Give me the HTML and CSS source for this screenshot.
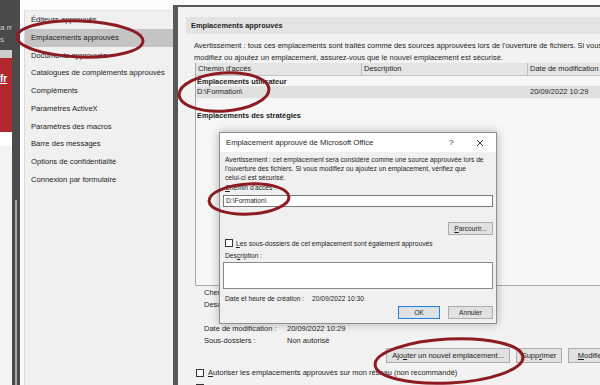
FILE: index.html
```html
<!DOCTYPE html>
<html lang="fr">
<head>
    <meta charset="UTF-8">
    <title>Centre de gestion de la confidentialité</title>
    <link rel="stylesheet" href="styles.css">
</head>
<body>
    <div class="screen">
        <div class="site-edge">
            <div class="edge-dark"><span>a m</span><span>s</span></div>
            <div class="edge-band"></div>
            <div class="edge-red"><span>fr</span></div>
            <div class="edge-white"></div>
            <div class="edge-light"></div>
        </div>
        <div class="frame-bar"><div class="frame-thumb"></div><div class="frame-line"></div></div>
        <div class="window">
            <nav class="sidebar">
                <a>Éditeurs approuvés</a>
                <a class="active">Emplacements approuvés</a>
                <a>Documents approuvés</a>
                <a>Catalogues de compléments approuvés</a>
                <a>Compléments</a>
                <a>Paramètres ActiveX</a>
                <a>Paramètres des macros</a>
                <a>Barre des messages</a>
                <a>Options de confidentialité</a>
                <a>Connexion par formulaire</a>
            </nav>
            <div class="split"></div>
            <main class="content">
                <h2 class="section-title">Emplacements approuvés</h2>
                <p class="warning">Avertissement : tous ces emplacements sont traités comme des sources approuvées lors de l'ouverture de fichiers. Si vous<br>modifiez ou ajoutez un emplacement, assurez-vous que le nouvel emplacement est sécurisé.</p>
                <div class="list">
                    <div class="list-head">
                        <span>Chemin d'accès</span>
                        <span>Description</span>
                        <span>Date de modification</span>
                    </div>
                    <div class="group">Emplacements utilisateur</div>
                    <div class="row selected">
                        <span>D:\Formation\</span>
                        <span></span>
                        <span>20/09/2022 10:29</span>
                    </div>
                    <div class="group policies">Emplacements des stratégies</div>
                </div>
                <div class="details">
                    <span>Chemin d'accès :</span><span>D:\Formation\</span>
                    <span>Description :</span><span></span>
                    <span></span><span></span>
                    <span>Date de modification :</span><span>20/09/2022 10:29</span>
                    <span>Sous-dossiers :</span><span>Non autorisé</span>
                </div>
                <div class="actions">
                    <button class="btn add">Ajo<u>u</u>ter un nouvel emplacement...</button>
                    <button class="btn remove">Supp<u>r</u>imer</button>
                    <button class="btn edit"><u>M</u>odifier...</button>
                </div>
                <label class="check"><span class="box"></span><span><u>A</u>utoriser les emplacements approuvés sur mon réseau (non recommandé)</span></label>
                <label class="check"><span class="box"></span><span><u>D</u>ésactiver tous les emplacements approuvés</span></label>
            </main>
        </div>
    </div>

    <div class="dialog">
        <div class="dialog-title">
            <span class="dialog-name">Emplacement approuvé de Microsoft Office</span>
            <span class="dialog-help">?</span>
            <svg class="dialog-close" width="8" height="8" viewBox="0 0 8 8"><path d="M1 1L7 7M7 1L1 7" stroke="#222" stroke-width="0.9" fill="none"/></svg>
        </div>
        <div class="dialog-body">
            <p class="dialog-text">Avertissement : cet emplacement sera considéré comme une source approuvée lors de<br>l'ouverture des fichiers. Si vous modifiez ou ajoutez un emplacement, vérifiez que<br>celui-ci est sécurisé.</p>
            <div class="field-label"><u>C</u>hemin d'accès :</div>
            <div class="input">D:\Formation\</div>
            <div class="browse-row"><button class="btn small"><u>P</u>arcourir...</button></div>
            <label class="check dialog-check"><span class="box"></span><span><u>L</u>es sous-dossiers de cet emplacement sont également approuvés</span></label>
            <div class="field-label">Des<u>c</u>ription :</div>
            <div class="textarea"></div>
            <div class="created"><span>Date et heure de création :</span><span>20/09/2022 10:30</span></div>
            <div class="dialog-buttons">
                <button class="btn small default">OK</button>
                <button class="btn small">Annuler</button>
            </div>
        </div>
    </div>

    <!-- annotations rouges -->
    <svg class="marks" width="600" height="385" viewBox="0 0 600 385">
        <g fill="none" stroke="#8d1c22" stroke-width="3">
            <ellipse cx="80" cy="39" rx="63" ry="18" transform="rotate(2 80 39)"/>
            <ellipse cx="224" cy="92" rx="45" ry="19" transform="rotate(-4 224 92)"/>
            <ellipse cx="249" cy="199" rx="40" ry="15" transform="rotate(-3 249 199)"/>
            <ellipse cx="449" cy="361" rx="74" ry="22" transform="rotate(-3 449 361)"/>
        </g>
    </svg>
</body>
</html>
```

FILE: styles.css
```css
* {
    box-sizing: border-box;
}
body {
    margin: 0;
    width: 600px;
    height: 385px;
    overflow: hidden;
    position: relative;
    background: #f0f0f0;
    font-family: "Liberation Sans", Arial, sans-serif;
    color: #1e1e1e;
}
u {
    text-decoration-thickness: 0.5px;
}

/* bord du site derrière la fenêtre */
.screen {
    display: flex;
    width: 600px;
    height: 385px;
}
.site-edge {
    width: 12px;
    flex-shrink: 0;
    display: flex;
    flex-direction: column;
    overflow: hidden;
    white-space: nowrap;
}
.edge-dark {
    height: 50px;
    background: #4a4a4a;
    color: #cfcfcf;
    font-size: 8px;
    padding-top: 22px;
}
.edge-dark span {
    display: block;
    line-height: 12px;
}
.edge-band {
    height: 8px;
    background: #cdcdcd;
}
.edge-red {
    height: 74px;
    background: #b2282c;
    color: #fff;
    font-weight: bold;
    font-size: 10px;
    padding-top: 15px;
}
.edge-red span {
    text-decoration: underline;
}
.edge-white {
    height: 14px;
    background: #fff;
}
.edge-light {
    flex: 1;
    background: #f3f3f3;
}
.frame-bar {
    width: 8px;
    flex-shrink: 0;
    background: #4b4b4b;
    display: flex;
    flex-direction: column;
    padding: 0 2px 0 3px;
}
.frame-thumb {
    height: 200px;
}
.frame-line {
    flex: 1;
    background: #a8a8a8;
    width: 2px;
}

/* fenêtre */
.window {
    flex: 1;
    min-width: 0;
    overflow: hidden;
    display: flex;
    background: #fbfbfb;
    padding: 5px 0 0 4px;
}
.sidebar {
    width: 149px;
    flex-shrink: 0;
    margin-top: 5px;
    background: #f0f0f0;
    border-left: 1px solid #dadada;
    border-top: 1px solid #e6e6e6;
    display: flex;
    flex-direction: column;
}
.sidebar a {
    height: 17.75px;
    line-height: 17.75px;
    font-size: 7.6px;
    padding-left: 6px;
    white-space: nowrap;
    color: #222;
}
.sidebar a.active {
    background: #c4c4c4;
}
.split {
    width: 5px;
    flex-shrink: 0;
    background: #595959;
}
.content {
    width: 460px;
    flex-shrink: 0;
    background: #f2f2f2;
    border-top: 2px solid #595959;
    padding: 10px 0 0 8px;
    font-size: 7.5px;
}
.section-title {
    margin: 0;
    height: 17px;
    line-height: 17px;
    background: #e3e3e3;
    font-size: 7.4px;
    font-weight: bold;
    padding-left: 5px;
}
.warning {
    margin: 6px 0 0 8px;
    line-height: 11.5px;
    white-space: nowrap;
}
.list {
    margin-left: 9px;
    height: 223px;
    background: #f6f6f6;
    border-left: 1px solid #a9a9a9;
    border-bottom: 1px solid #a9a9a9;
}
.list-head,
.row {
    display: grid;
    grid-template-columns: 166px 166px 1fr;
}
.list-head span {
    height: 13px;
    line-height: 12px;
    background: #e4e4e4;
    border-right: 1px solid #bfbfbf;
    border-bottom: 1px solid #c4c4c4;
    padding-left: 2px;
}
.group {
    height: 10px;
    line-height: 11px;
    font-weight: bold;
    font-size: 7.4px;
    padding-left: 1px;
}
.group.policies {
    margin-top: 12px;
    height: 12px;
}
.row {
    height: 12px;
    line-height: 12px;
    padding-left: 1px;
}
.row span:last-child {
    padding-left: 1px;
}
.row.selected {
    background: #e0e0e0;
}
.details {
    display: grid;
    grid-template-columns: 83px 1fr;
    margin: 1px 0 0 18px;
    line-height: 12px;
}
.details span {
    height: 12px;
}
.actions {
    display: flex;
    gap: 6px;
    margin: 1px 0 0 200px;
}
.btn {
    font-family: inherit;
    font-size: 7.5px;
    color: #1e1e1e;
    background: #e1e1e1;
    border: 1px solid #adadad;
    height: 15px;
    padding: 0;
    white-space: nowrap;
}
.btn.add {
    width: 124px;
}
.btn.remove {
    width: 46px;
}
.btn.edit {
    width: 52px;
}
.check {
    display: flex;
    align-items: center;
    gap: 4px;
    height: 15px;
    margin-left: 10px;
    white-space: nowrap;
}
.content .check:first-of-type {
    margin-top: 2px;
}
.box {
    width: 8px;
    height: 8px;
    border: 1px solid #333;
    background: #fff;
    flex-shrink: 0;
}

/* boîte de dialogue */
.dialog {
    position: absolute;
    left: 219px;
    top: 132px;
    width: 278px;
    height: 192px;
    border: 1px solid #8e8e8e;
    background: #f0f0f0;
    box-shadow: 0 0 9px rgba(0, 0, 0, 0.28);
    display: flex;
    flex-direction: column;
}
.dialog-title {
    height: 19px;
    background: #fff;
    display: flex;
    align-items: center;
    padding-left: 6px;
    font-size: 7.7px;
}
.dialog-name {
    flex: 1;
}
.dialog-help {
    width: 27px;
    font-size: 8px;
}
.dialog-close {
    margin-right: 12px;
}
.dialog-body {
    padding: 2.5px 3px 0 3px;
    font-size: 6.7px;
}
.dialog-text {
    margin: 0;
    padding-left: 2px;
    line-height: 9px;
    white-space: nowrap;
}
.field-label {
    padding-left: 2px;
    height: 10px;
    line-height: 10px;
    margin-top: 1.5px;
}
.input {
    height: 12px;
    margin-top: 2px;
    background: #fff;
    border: 1px solid #7a7a7a;
    line-height: 10px;
    padding-left: 2px;
}
.browse-row {
    display: flex;
    justify-content: flex-end;
    margin-top: 15px;
}
.btn.small {
    height: 13px;
    width: 45px;
    font-size: 6.7px;
}
.dialog-check {
    margin: 3px 0 0 2px;
    height: 10px;
    gap: 3px;
}
.dialog-check + .field-label {
    margin-top: 3px;
}
.textarea {
    height: 27px;
    margin-top: 1px;
    background: #fff;
    border: 1px solid #8a8a8a;
}
.created {
    display: flex;
    padding-left: 2px;
    margin-top: 5px;
    height: 10px;
    line-height: 10px;
    white-space: nowrap;
}
.created span:first-child {
    width: 87px;
    flex-shrink: 0;
}
.dialog-buttons {
    display: flex;
    justify-content: flex-end;
    gap: 8px;
    margin-top: 2px;
}
.btn.default {
    width: 42px;
    border: 1px solid #2f7fd0;
    box-shadow: inset 0 0 0 1px #cfe3f7;
}

/* annotations */
.marks {
    position: absolute;
    left: 0;
    top: 0;
    pointer-events: none;
}
```
